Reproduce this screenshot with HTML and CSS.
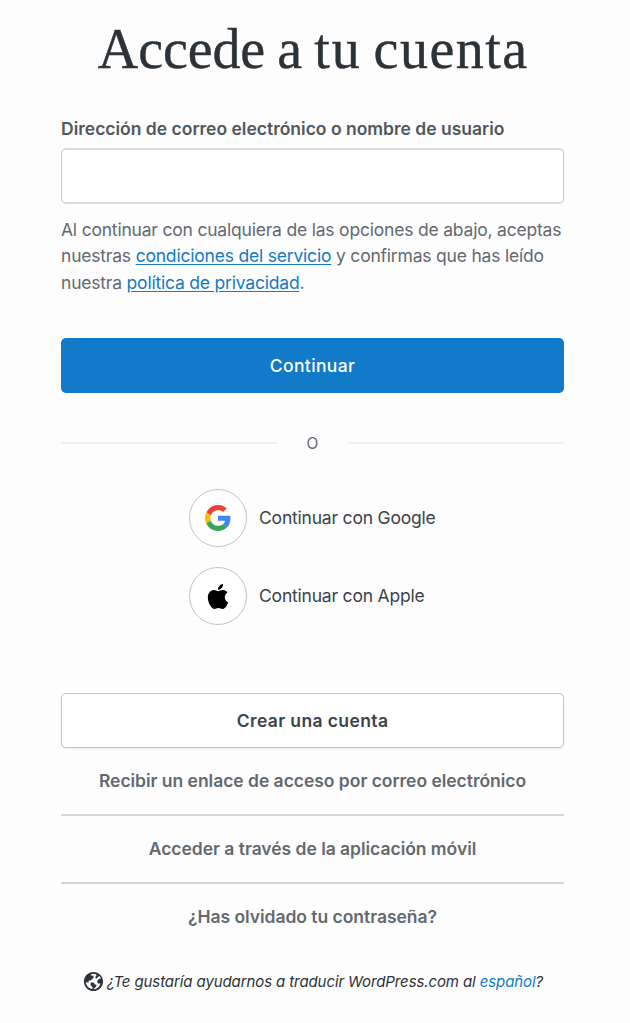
FILE: index.html
```html
<!DOCTYPE html>
<html lang="es">
<head>
<meta charset="utf-8">
<title>Accede a tu cuenta</title>
<link rel="stylesheet" href="styles.css">
</head>
<body>
<main class="login">
  <h1 class="title"><span class="word-1">Accede</span> a <span class="word-3">tu</span> <span class="word-4">cuenta</span></h1>
  <form class="form">
    <label class="label" for="user">Dirección de correo electrónico o nombre de usuario</label>
    <input class="field" id="user" type="text">
    <p class="terms">
      <span class="line">Al continuar con cualquiera de las opciones de abajo, aceptas</span>
      <span class="line">nuestras <a class="link" href="#">condiciones del servicio</a> y confirmas que has leído</span>
      <span class="line">nuestra <a class="link" href="#">política de privacidad</a>.</span>
    </p>
    <button class="button primary" type="button">Continuar</button>
  </form>
  <div class="divider"><span class="divider-text">O</span></div>
  <div class="social">
    <a class="provider" href="#">
      <span class="circle">
        <svg width="26" height="26" viewBox="0 0 48 48"><path fill="#EA4335" d="M24 9.5c3.54 0 6.71 1.22 9.21 3.6l6.85-6.85C35.9 2.38 30.47 0 24 0 14.62 0 6.51 5.38 2.56 13.22l7.98 6.19C12.43 13.72 17.74 9.5 24 9.5z"/><path fill="#4285F4" d="M46.98 24.55c0-1.57-.15-3.09-.38-4.55H24v9.02h12.94c-.58 2.96-2.26 5.48-4.78 7.18l7.73 6c4.51-4.18 7.09-10.36 7.09-17.65z"/><path fill="#FBBC05" d="M10.53 28.59c-.48-1.45-.76-2.99-.76-4.59s.27-3.14.76-4.59l-7.98-6.19C.92 16.46 0 20.12 0 24c0 3.88.92 7.54 2.56 10.78l7.97-6.19z"/><path fill="#34A853" d="M24 48c6.48 0 11.93-2.13 15.89-5.81l-7.73-6c-2.15 1.45-4.92 2.3-8.16 2.3-6.26 0-11.57-4.22-13.47-9.91l-7.98 6.19C6.51 42.62 14.62 48 24 48z"/></svg>
      </span>
      <span class="provider-name">Continuar con Google</span>
    </a>
    <a class="provider" href="#">
      <span class="circle">
        <svg width="22" height="25" viewBox="0 0 814 1000"><path d="M788.1 340.9c-5.8 4.5-108.2 62.2-108.2 190.5 0 148.4 130.3 200.9 134.2 202.2-.6 3.2-20.7 71.9-68.7 141.9-42.8 61.6-87.5 123.1-155.5 123.1s-85.5-39.5-164-39.5c-76.5 0-103.7 40.8-165.9 40.8s-105.6-57-155.5-127C46.7 790.7 0 663 0 541.8c0-194.4 126.4-297.5 250.8-297.5 66.1 0 121.2 43.4 162.7 43.4 39.5 0 101.1-46 176.3-46 28.5 0 130.9 2.6 198.3 99.2zm-234-181.5c31.1-36.9 53.1-88.1 53.1-139.3 0-7.1-.6-14.3-1.9-20.1-50.6 1.9-110.8 33.7-147.1 75.8-28.5 32.4-55.1 83.6-55.1 135.5 0 7.8 1.3 15.6 1.9 18.1 3.2.6 8.4 1.3 13.6 1.3 45.4 0 102.5-30.4 135.5-71.3z"/></svg>
      </span>
      <span class="provider-name">Continuar con Apple</span>
    </a>
  </div>
  <a class="button secondary" href="#">Crear una cuenta</a>
  <nav class="links">
    <a class="links-item" href="#">Recibir un enlace de acceso por correo electrónico</a>
    <a class="links-item" href="#">Acceder a través de la aplicación móvil</a>
    <a class="links-item" href="#">¿Has olvidado tu contraseña?</a>
  </nav>
  <footer class="translate">
    <svg class="globe" width="23" height="23" viewBox="0 0 24 24"><path d="M12 2C6.477 2 2 6.477 2 12s4.477 10 10 10 10-4.477 10-10S17.523 2 12 2zm0 18l2-2 1-1v-2h-2v-1l-1-1H9v3l2 2v1.93c-3.94-.494-7-3.858-7-7.93l1 1h2v-2h2l3-3V6h-2L9 5v-.41C9.927 4.21 10.94 4 12 4s2.073.212 3 .59V6l-1 1v1l1 1 3.13-3.13c.752.897 1.304 1.964 1.606 3.13H18l-2 2v2l1 1h2l.286.286C18.03 18.06 15.24 20 12 20z"/></svg>
    <span class="translate-text">¿Te gustaría ayudarnos a traducir WordPress.com al <a class="plain" href="#">español</a>?</span>
  </footer>
</main>
</body>
</html>
```
FILE: styles.css
```css
* { box-sizing: border-box; }
body {
  margin: 0;
  background: #fdfdfd;
  color: #2c3338;
  font-family: Inter, "Liberation Sans", sans-serif;
  font-size: 17.5px;
}
.login {
  display: flex;
  flex-direction: column;
  width: 503px;
  margin-left: 61px;
  padding-top: 16px;
}
.title {
  margin: 0;
  font: 400 56px/66px "Liberation Serif", serif;
  letter-spacing: 0.25px;
  word-spacing: -2.2px;
  text-align: center;
  white-space: nowrap;
  -webkit-text-stroke: 0.4px #2c3338;
}
.word-1 { letter-spacing: -0.1px; }
.word-3 { letter-spacing: 1.8px; }
.word-4 { letter-spacing: 1.5px; margin-right: -1.5px; }
.form { display: flex; flex-direction: column; }
.label {
  margin-top: 34px;
  font-weight: 600;
  line-height: 26px;
  color: #50575e;
  white-space: nowrap;
}
.field {
  height: 56px;
  margin-top: 6px;
  padding: 0 16px;
  border: 1px solid #c9cacc;
  border-width: 2px 1px;
  border-color: #d9dadb #c9cacc;
  border-radius: 5px;
  background: #fff;
  font: inherit;
}
.terms {
  margin: 13px 0 0;
  color: #646970;
  line-height: 26.4px;
  letter-spacing: -0.2px;
}
.line { display: block; white-space: nowrap; }
.link { color: #117ac9; text-underline-offset: 2px; }
.button {
  display: flex;
  align-items: center;
  justify-content: center;
  height: 55px;
  border-radius: 5px;
  font: inherit;
  letter-spacing: 0.38px;
  text-decoration: none;
}
.primary {
  margin-top: 42px;
  border: 0;
  background: #117ac9;
  color: #fff;
  font-weight: 500;
}
.divider {
  display: flex;
  align-items: center;
  gap: 30px;
  height: 20px;
  margin-top: 40px;
  color: #646970;
  font-size: 15.5px;
}
.divider::before, .divider::after {
  content: "";
  flex: 1;
  height: 2px;
  background: #f0f0f1;
}
.social {
  display: flex;
  flex-direction: column;
  gap: 20px;
  margin: 36px 0 0 128px;
}
.provider {
  display: flex;
  align-items: center;
  gap: 12px;
  color: #3c434a;
  text-decoration: none;
}
.provider-name { padding-bottom: 2px; letter-spacing: -0.2px; }
.circle {
  display: flex;
  align-items: center;
  justify-content: center;
  width: 58px;
  height: 58px;
  border: 1.5px solid #c3c4c7;
  border-radius: 50%;
  background: #fff;
}
.secondary {
  margin-top: 68px;
  border: 1.5px solid #c3c4c7;
  background: #fff;
  box-shadow: 0 1px 2px rgba(0, 0, 0, .08);
  color: #3c434a;
  font-weight: 600;
}
.links { display: flex; flex-direction: column; text-align: center; }
.links-item {
  height: 68px;
  line-height: 66px;
  border-bottom: 2px solid #d5d6d8;
  color: #646970;
  font-weight: 600;
  letter-spacing: -0.03px;
  text-decoration: none;
}
.links-item:last-child { border: 0; }
.translate {
  display: flex;
  align-items: center;
  justify-content: center;
  gap: 2px;
  margin-top: 18px;
  font-size: 15px;
  font-style: italic;
  letter-spacing: -0.1px;
  white-space: nowrap;
}
.globe { fill: #2c3338; }
.plain { color: #117ac9; text-decoration: none; }
```
